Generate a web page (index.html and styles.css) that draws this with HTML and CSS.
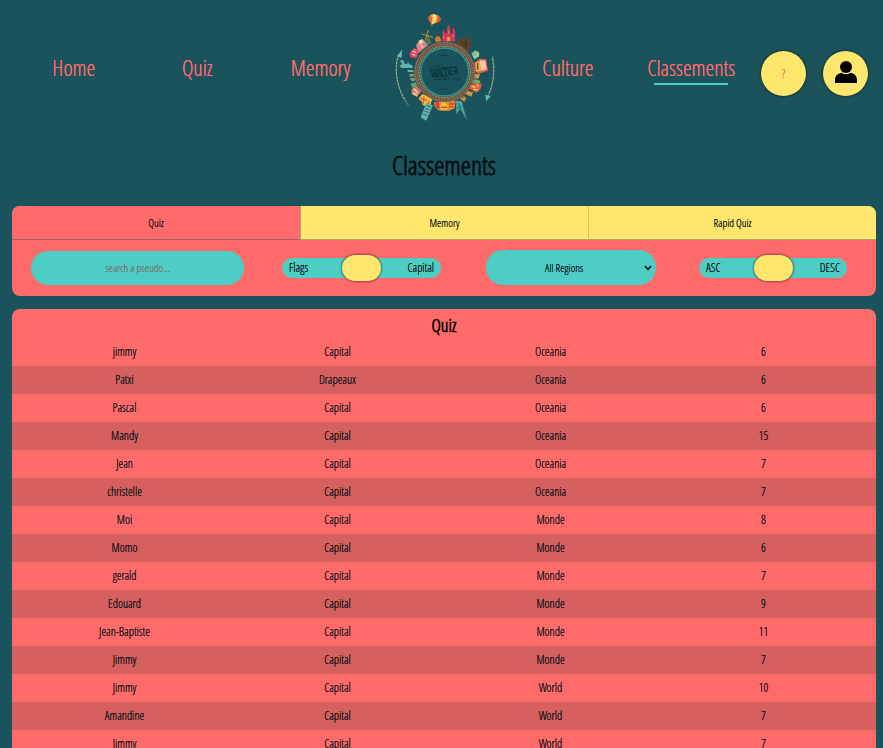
FILE: index.html
```html
<!DOCTYPE html>
<html lang="en">
<head>
<meta charset="utf-8">
<meta name="viewport" content="width=device-width, initial-scale=1">
<title>Classements</title>
<link rel="stylesheet" href="styles.css">
</head>
<body>
<header class="header">
  <nav class="nav">
    <a class="nav-link" href="#home">Home</a>
    <a class="nav-link" href="#quiz">Quiz</a>
    <a class="nav-link" href="#memory">Memory</a>
    <a class="logo" href="#home" aria-label="Home">
      <svg viewBox="-3 2 390 375" width="130" height="125" aria-hidden="true">
        <!-- balloon -->
        <g transform="rotate(14 163 42)">
          <path d="M145 43C144 32 153 27 163 27C175 27 183 34 181 42C177 49 168 53 160 58Q148 51 145 43Z" fill="#efb43f"/>
          <path d="M151 32Q158 43 158 56Q148 51 145 43Q145 36 151 32Z" fill="#e95b4d"/>
          <path d="M161 27Q174 33 163 56L158 57Q164 40 155 29Z" fill="#f5df85"/>
          <path d="M167 28Q181 30 181 41Q176 49 168 52Q178 39 167 28Z" fill="#df533d"/>
          <path d="M156 58h7v5h-6z" fill="#a96a3f"/>
        </g>
        <!-- side arcs -->
        <g fill="none" stroke="#4a9a97" stroke-width="3">
          <path d="M66 135Q44 163 50 212Q57 267 86 301"/>
          <path d="M338 153Q352 217 321 282"/>
        </g>
        <path d="M52 158Q42 205 61 255Q68 274 78 286M337 160Q347 218 326 266" fill="none" stroke="#b9b077" stroke-width="3" stroke-dasharray="7 4"/>
        <path d="M50 153l16-19-1 23zM316 268l3 20 13-16z" fill="#64bbb1"/>
        <!-- windmill and upper left houses -->
        <g stroke="#b89845" stroke-width="3">
          <path d="M125 86l34 10M145 74l-9 32M142 89l7 22"/>
        </g>
        <path d="M137 94h10l8 20-15 5z" fill="#52764e"/>
        <path d="M108 119l11-13 10-4 15 18-29 24z" fill="#d9858a"/>
        <path d="M115 107l11-6 5 9-11 8z" fill="#f2d2ae"/>
        <path d="M90 143l12-15 15 7-7 23-19-2z" fill="#e94762"/>
        <path d="M98 137l10 4M96 146l9 4M122 119l8 8" stroke="#f4c6ad" stroke-width="4"/>
        <!-- castle -->
        <path d="M165 99l5-6 10 1 4 13-17 4z" fill="#d77b2e"/>
        <path d="M187 108V82l5-10 5 13 4-1V68l5-11 5 13v16l6-1v-11l4-8 4 10v32z" fill="#d6355a"/>
        <path d="M191 91v8M206 76v8M220 88v7M202 96h7v10h-7z" fill="#f3bf55" stroke="#eb865b" stroke-width="3"/>
        <!-- trees -->
        <path d="M230 108l7-8 8 1 5-5 7 5 11-6 5 10-4 9 5 8-7 7-4 10-17-12-18-9z" fill="#624328"/>
        <path d="M243 108l22 12M258 101v29" stroke="#473824" stroke-width="5"/>
        <!-- right buildings -->
        <path d="M274 145l11-10 13 6-1 13-14 8z" fill="#7ac29a"/>
        <path d="M285 144l11 4M281 154l15-3" stroke="#e6cb7a" stroke-width="3"/>
        <path d="M283 172l17-12 18 2 6 34-28 9-12-8z" fill="#e75d55"/>
        <path d="M299 165l17 1 4 26-17 4z" fill="#f6c9a8"/>
        <path d="M286 173l13-5 4 28-13 3z" fill="#e8b63d"/>
        <path d="M293 173v20" stroke="#4c5640" stroke-width="4"/>
        <path d="M285 205l15 1-4 14-13-2z" fill="#ca9648"/>
        <path d="M283 221l19 5-4 10-20-2z" fill="#73a75a"/>
        <path d="M277 237l28-3-3 17-13 11-22-13z" fill="#e35b44"/>
        <path d="M272 242l15 4M280 252l14 2M291 237l5 8" stroke="#f4cd56" stroke-width="4"/>
        <path d="M260 256l19 5-5 13-18-8z" fill="#d49743"/>
        <!-- statue and left side -->
        <g fill="#63b4aa">
          <path d="M59 165h11l4 10 22 4 3 9H65l-7-7 9-4z"/>
          <path d="M80 179l4-10 5 11z"/>
          <path d="M83 194h17v6H83z"/>
        </g>
        <path d="M86 207l16-2 2 7-13 3M89 219l15-2 3 9-12 2" fill="#7d996f"/>
        <path d="M91 235l16-4 5 12-14 5z" fill="#59a56a"/>
        <path d="M95 251l15-8 14 13-13 20-16-11z" fill="#d6776a"/>
        <path d="M101 250l13 13M98 263l13 7" stroke="#f5cda2" stroke-width="5"/>
        <!-- bottom buildings -->
        <path d="M115 281l12-15 30 13-7 25-22-4-3-12z" fill="#efc13f"/>
        <path d="M121 280l20 5M132 273l-3 24M141 298l8-11" stroke="#e8643b" stroke-width="5"/>
        <path d="M139 293l20 7-20 46-17-10z" fill="#63b4aa"/>
        <path d="M139 300l14 5M136 309l13 5M133 317l13 5M129 326l13 5" stroke="#256a70" stroke-width="3"/>
        <path d="M163 290l64-3-3 22-17 7-32-1-12-13z" fill="#e68b31"/>
        <path d="M166 292l11-6 2 26-12-6z" fill="#ce3f4e"/>
        <path d="M180 300q12-20 22 0v15h-20z" fill="#f3bd37"/>
        <path d="M184 306h17M207 296h17M207 304h15" stroke="#b84a32" stroke-width="4"/>
        <path d="M228 286l17 2 16 57-20-34-12 16z" fill="#4fa49b"/>
        <path d="M235 294l9 21M231 309l12-4" stroke="#286b70" stroke-width="3"/>
        <path d="M240 280l13-8 7 8-8 9z" fill="#c68342"/>
        <!-- rings -->
        <circle cx="194" cy="200" r="83" fill="none" stroke="#6d5548" stroke-width="14"/>
        <circle cx="194" cy="200" r="89" fill="none" stroke="#b98a60" stroke-width="3" stroke-dasharray="5 3"/>
        <circle cx="194" cy="200" r="83" fill="none" stroke="#a07c68" stroke-width="3" stroke-dasharray="4 5"/>
        <circle cx="194" cy="200" r="77" fill="none" stroke="#b5a955" stroke-width="3" stroke-dasharray="6 3"/>
        <circle cx="194" cy="200" r="72" fill="#1b535c" stroke="#3b9495" stroke-width="4"/>
        <!-- badge -->
        <g transform="rotate(-9 194 200)" fill="#062e35">
          <text class="badge-small" x="149" y="184">BECOME A</text>
          <text class="badge-name" x="194" y="213" text-anchor="middle">WILDER</text>
          <text class="badge-small" x="211" y="231">TODAY</text>
          <path d="M148 187h38l5-3 5 3h33v2h-34l-4 3-4-3h-39zM156 218h32l4 3 5-3h9v2h-8l-6 5-5-5h-31z"/>
        </g>
        <path d="M183 151h21M183 251h21" stroke="#082f36" stroke-width="3" stroke-dasharray="4 4"/>
      </svg>
    </a>
    <a class="nav-link" href="#culture">Culture</a>
    <a class="nav-link active" href="#classements" aria-current="page">Classements</a>
  </nav>
  <div class="actions">
    <button class="round" type="button">?</button>
    <button class="round" type="button" aria-label="Profile">
      <svg viewBox="0 0 24 24" width="24" height="24" aria-hidden="true">
        <path d="M1 22V19C1 15 3.500 12.500 7.500 11.700Q12 15 16.500 11.700C20.500 12.500 23 15 23 19V22Z"/>
        <circle cx="12" cy="6" r="6"/>
      </svg>
    </button>
  </div>
</header>

<main class="page">
  <h1 class="title">Classements</h1>

  <section class="card filters">
    <div class="tabs">
      <button class="tab selected" type="button">Quiz</button>
      <button class="tab" type="button">Memory</button>
      <button class="tab" type="button">Rapid Quiz</button>
    </div>
    <form class="controls">
      <input class="search" type="text" placeholder="search a pseudo..." aria-label="search a pseudo">
      <div class="switch">
        <label class="switch-labels" for="mode"><span>Flags</span><span>Capital</span></label>
        <input class="slider" id="mode" type="range" min="0" max="2" value="1">
      </div>
      <div class="region">
        <select class="select" aria-label="Region"><option>All Regions</option></select>
        <svg class="chevron" viewBox="0 0 8 6" width="8" height="6" aria-hidden="true"><path d="M1 1L4 4.500L7 1"/></svg>
      </div>
      <div class="switch order">
        <label class="switch-labels" for="order"><span>ASC</span><span>DESC</span></label>
        <input class="slider" id="order" type="range" min="0" max="2" value="1">
      </div>
    </form>
  </section>

  <section class="card">
    <h2 class="subtitle">Quiz</h2>
    <table class="scores" aria-label="Quiz">
      <tbody>
        <tr><td>jimmy</td><td>Capital</td><td>Oceania</td><td>6</td></tr>
        <tr><td>Patxi</td><td>Drapeaux</td><td>Oceania</td><td>6</td></tr>
        <tr><td>Pascal</td><td>Capital</td><td>Oceania</td><td>6</td></tr>
        <tr><td>Mandy</td><td>Capital</td><td>Oceania</td><td>15</td></tr>
        <tr><td>Jean</td><td>Capital</td><td>Oceania</td><td>7</td></tr>
        <tr><td>christelle</td><td>Capital</td><td>Oceania</td><td>7</td></tr>
        <tr><td>Moi</td><td>Capital</td><td>Monde</td><td>8</td></tr>
        <tr><td>Momo</td><td>Capital</td><td>Monde</td><td>6</td></tr>
        <tr><td>gerald</td><td>Capital</td><td>Monde</td><td>7</td></tr>
        <tr><td>Edouard</td><td>Capital</td><td>Monde</td><td>9</td></tr>
        <tr><td>Jean-Baptiste</td><td>Capital</td><td>Monde</td><td>11</td></tr>
        <tr><td>Jimmy</td><td>Capital</td><td>Monde</td><td>7</td></tr>
        <tr><td>Jimmy</td><td>Capital</td><td>World</td><td>10</td></tr>
        <tr><td>Amandine</td><td>Capital</td><td>World</td><td>7</td></tr>
        <tr><td>Jimmy</td><td>Capital</td><td>World</td><td>7</td></tr>
      </tbody>
    </table>
  </section>
</main>
</body>
</html>
```
FILE: styles.css
```css
:root {
  --bg: #1b535c;
  --coral: #ff6b6b;
  --yellow: #ffe66d;
  --teal: #4ecdc4;
  --line: rgba(27, 83, 92, 0.4);
}

* {
  box-sizing: border-box;
}

html {
  background: var(--bg);
  scrollbar-width: none;
}

body {
  margin: 0;
  font-family: "Open Sans Condensed Light", "Open Sans Condensed", "Liberation Sans Narrow", "Liberation Sans", sans-serif;
  font-weight: 300;
  color: #081418;
}

button,
input,
select {
  font-family: inherit;
  font-weight: inherit;
  color: inherit;
}

/* A second pass of the same glyphs gives the light face more body. */
.nav-link,
.round,
.tab,
.search,
.select,
.switch-labels,
.scores {
  text-shadow: 0 0 0 currentColor;
}

.header {
  display: flex;
  align-items: center;
  height: 136px;
  padding: 0 15px 0 12px;
}

.nav {
  flex: 1;
  display: grid;
  grid-template-columns: repeat(6, minmax(0, 1fr));
  align-items: center;
  justify-items: center;
}

.nav-link {
  position: relative;
  padding-bottom: 2px;
  color: var(--coral);
  font-size: 22px;
  line-height: 28px;
  text-decoration: none;
}

.active::after {
  content: "";
  position: absolute;
  left: 8%;
  right: 8%;
  bottom: -2px;
  height: 2px;
  background: var(--teal);
}

.logo,
.logo svg {
  display: block;
}

.badge-name {
  font-size: 32px;
  font-weight: bold;
}

.badge-small {
  font-size: 13px;
}

.actions {
  display: flex;
  gap: 17px;
  padding: 10px 0 0 8px;
}

.round {
  display: grid;
  place-items: center;
  width: 45px;
  height: 45px;
  padding: 0;
  border: 0;
  border-radius: 50%;
  background: var(--yellow);
  box-shadow: 0 0 3px rgba(0, 0, 0, 0.7);
  color: var(--coral);
  font-size: 13px;
}

.round svg {
  fill: #000;
}

.page {
  padding: 0 7px 0 12px;
}

.title {
  margin: 0 0 24px;
  padding-top: 12px;
  color: #041114;
  font-size: 26px;
  line-height: 34px;
  text-align: center;
}

.card {
  overflow: hidden;
  margin-bottom: 13px;
  border-radius: 8px;
  background: var(--coral);
}

.tabs {
  display: grid;
  grid-template-columns: repeat(3, 1fr);
}

.tab {
  height: 34px;
  padding: 0;
  border: 0;
  border-left: 1px solid var(--line);
  border-bottom: 1px solid var(--line);
  background: var(--yellow);
  font-size: 11px;
}

.tab.selected {
  border-left: 0;
  background: var(--coral);
}

.tab:last-child {
  border-left-color: rgba(27, 83, 92, 0.2);
}

.controls {
  display: grid;
  grid-template-columns: 251fr 204fr 213fr 148fr;
  align-items: center;
  height: 56px;
  padding: 0 29px 1px 19px;
}

.search {
  width: 85%;
  height: 34px;
  padding: 0;
  border: 0;
  border-radius: 17px;
  background: var(--teal);
  font-size: 11px;
  text-align: center;
}

.search::placeholder {
  color: #757575;
}

.switch {
  display: grid;
  align-items: center;
  width: 78%;
}

.order {
  width: 100%;
}

.switch-labels,
.slider {
  grid-area: 1 / 1;
}

.switch-labels {
  display: flex;
  justify-content: space-between;
  padding: 0 7px;
  border-radius: 10px;
  background: var(--teal);
  font-size: 12px;
  line-height: 20px;
}

.slider {
  appearance: none;
  width: 100%;
  height: 28px;
  margin: 0;
  background: transparent;
}

.slider::-webkit-slider-thumb {
  appearance: none;
  width: 39px;
  height: 26px;
  border: 0;
  border-radius: 13px;
  background: var(--yellow);
  box-shadow: 0 0 3px rgba(0, 0, 0, 0.8);
}

.region {
  display: grid;
  align-items: center;
  width: 80%;
}

.select,
.chevron {
  grid-area: 1 / 1;
}

.select {
  appearance: none;
  width: 100%;
  height: 35px;
  padding: 0 14px 0 0;
  border: 0;
  border-radius: 17px;
  background: var(--teal);
  font-size: 11px;
  text-align: center;
  text-align-last: center;
}

.chevron {
  justify-self: end;
  margin-right: 4px;
  fill: none;
  stroke: #000;
  stroke-width: 1.400;
  pointer-events: none;
}

.subtitle {
  margin: 0;
  padding-top: 4px;
  color: #000;
  font-size: 18px;
  line-height: 25px;
  text-align: center;
}

.scores {
  display: block;
}

.scores tbody {
  display: block;
}

.scores tr {
  display: flex;
  padding: 0 6px;
}

.scores tr:nth-child(even) {
  background: #d65f5f;
}

.scores td {
  flex: 1 1 0;
  padding: 0;
  font-size: 12px;
  line-height: 28px;
  text-align: center;
}
```
